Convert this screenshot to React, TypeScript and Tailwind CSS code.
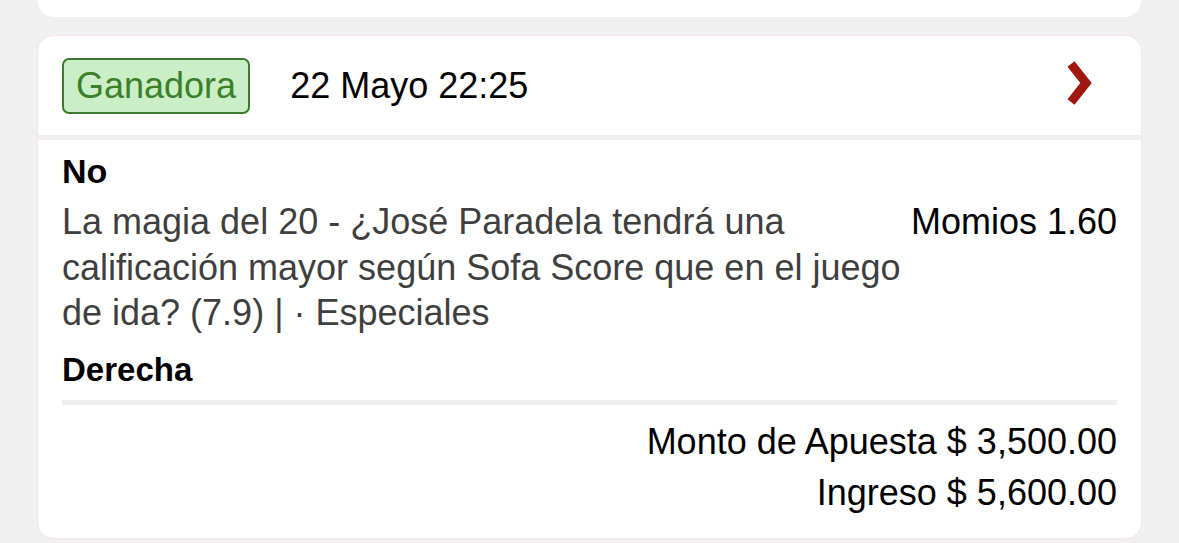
import React from "react";

export default function App() {
  return (
    <div
      className="w-[1179px] h-[543px] overflow-hidden bg-[#f0f0f0]"
      style={{ fontFamily: '"Liberation Sans", Arial, sans-serif' }}
    >
      <div className="mx-[38px] h-[17px] rounded-b-[16px] bg-white" />
      <div className="mx-[37px] mt-[18px] rounded-[16px] border border-[#f7e3e3] bg-white">
        <div className="flex h-[99px] items-center pl-[24px] pr-[48px]">
          <div className="flex h-[56px] items-center rounded-[7px] border-2 border-[#3b7a2c] bg-[#caefc6] px-[12px] text-[36px] text-[#3b7f2b]">
            Ganadora
          </div>
          <div className="ml-[40px] text-[36px] text-black">22 Mayo 22:25</div>
          <div className="ml-auto -mt-[6px]">
            <svg width="28" height="44" viewBox="0 0 28 44">
              <path d="M6 3 L21 22 L6 41" fill="none" stroke="#a0170f" strokeWidth="9" strokeLinejoin="miter" />
            </svg>
          </div>
        </div>
        <div className="h-[5px] bg-[#efefef]" />
        <div className="px-[24px] pb-[20px] pt-[11px]">
          <div className="text-[34px] font-bold leading-[40px] text-black">No</div>
          <div className="mt-[8px] flex gap-[2px]">
            <div className="flex-1 text-[36px] leading-[45.5px] text-[#3f3f3f]">
              La magia del 20 - ¿José Paradela tendrá una calificación mayor según Sofa Score que en el juego de ida? (7.9) | · Especiales
            </div>
            <div className="text-[36px] leading-[45.5px] text-black">Momios 1.60</div>
          </div>
          <div className="mt-[14px] text-[33px] font-bold leading-[40px] text-black">Derecha</div>
          <div className="mt-[10px] h-[5px] bg-[#efefef]" />
          <div className="mt-[11px] text-right text-[36px] leading-[51px] text-black">Monto de Apuesta $ 3,500.00</div>
          <div className="text-right text-[36px] leading-[51px] text-black">Ingreso $ 5,600.00</div>
        </div>
      </div>
    </div>
  );
}
